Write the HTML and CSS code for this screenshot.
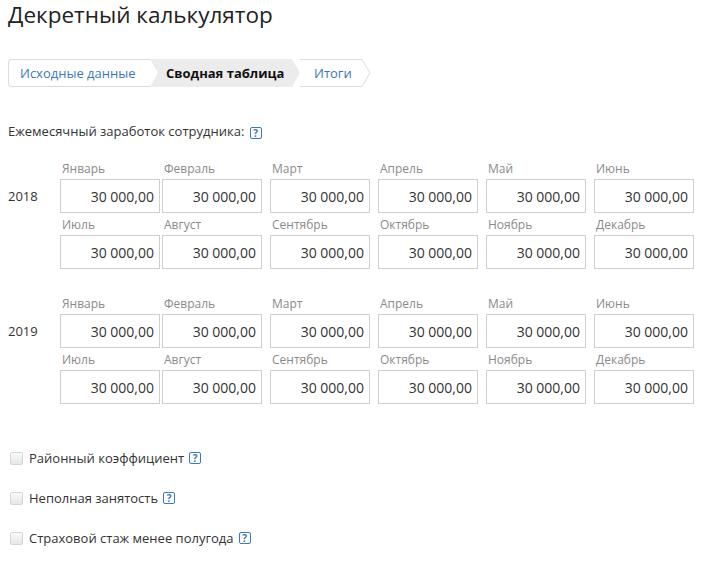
FILE: index.html
```html
<!DOCTYPE html>
<html lang="ru">
<head>
<meta charset="utf-8">
<title>Декретный калькулятор</title>
<link rel="stylesheet" href="styles.css">
</head>
<body>
<div class="page">
  <h1 class="title">Декретный калькулятор</h1>

  <nav class="steps">
    <a class="step step-first">Исходные данные</a>
    <span class="step step-active">Сводная таблица</span>
    <a class="step step-last">Итоги</a>
    <svg class="step-tip" width="9" height="28" viewBox="0 0 9 28"><polyline points="0,0.5 8,14 0,27.5" fill="#fff" stroke="#dcdcdc" stroke-width="1"/></svg>
  </nav>

  <div class="field-label">Ежемесячный заработок сотрудника: <span class="help">?</span></div>

  <div class="year-block">
    <div></div>
    <div class="m">Январь</div><div class="m">Февраль</div><div class="m">Март</div><div class="m">Апрель</div><div class="m">Май</div><div class="m">Июнь</div>
    <div class="year">2018</div>
    <input class="amount" value="30 000,00"><input class="amount" value="30 000,00"><input class="amount" value="30 000,00"><input class="amount" value="30 000,00"><input class="amount" value="30 000,00"><input class="amount" value="30 000,00">
    <div></div>
    <div class="m">Июль</div><div class="m">Август</div><div class="m">Сентябрь</div><div class="m">Октябрь</div><div class="m">Ноябрь</div><div class="m">Декабрь</div>
    <div></div>
    <input class="amount" value="30 000,00"><input class="amount" value="30 000,00"><input class="amount" value="30 000,00"><input class="amount" value="30 000,00"><input class="amount" value="30 000,00"><input class="amount" value="30 000,00">
  </div>

  <div class="year-block">
    <div></div>
    <div class="m">Январь</div><div class="m">Февраль</div><div class="m">Март</div><div class="m">Апрель</div><div class="m">Май</div><div class="m">Июнь</div>
    <div class="year">2019</div>
    <input class="amount" value="30 000,00"><input class="amount" value="30 000,00"><input class="amount" value="30 000,00"><input class="amount" value="30 000,00"><input class="amount" value="30 000,00"><input class="amount" value="30 000,00">
    <div></div>
    <div class="m">Июль</div><div class="m">Август</div><div class="m">Сентябрь</div><div class="m">Октябрь</div><div class="m">Ноябрь</div><div class="m">Декабрь</div>
    <div></div>
    <input class="amount" value="30 000,00"><input class="amount" value="30 000,00"><input class="amount" value="30 000,00"><input class="amount" value="30 000,00"><input class="amount" value="30 000,00"><input class="amount" value="30 000,00">
  </div>

  <div class="options">
    <label class="option"><input type="checkbox" class="check"> Районный коэффициент <span class="help">?</span></label>
    <label class="option"><input type="checkbox" class="check"> Неполная занятость <span class="help">?</span></label>
    <label class="option"><input type="checkbox" class="check"> Страховой стаж менее полугода <span class="help">?</span></label>
  </div>
</div>
</body>
</html>
```

FILE: styles.css
```css
* { box-sizing: border-box; }
html, body { margin: 0; background: #fff; }
body {
  font-family: "Open Sans", "Noto Sans", sans-serif;
  color: #333;
  font-size: 13px;
}
.page { padding: 0 8px; }

.title {
  margin: 0;
  padding-top: 0;
  font-size: 22.5px;
  font-weight: 400;
  line-height: 30px;
  color: #222;
}

.steps {
  display: flex;
  height: 28px;
  margin-top: 29px;
  font-size: 13px;
  line-height: 26px;
}
.step { display: block; height: 28px; white-space: nowrap; }
.step-first {
  width: 142px;
  padding-left: 11px;
  border: 1px solid #dcdcdc;
  border-right: none;
  border-radius: 4px 0 0 4px;
  color: #3d78b8;
}
.step-active {
  width: 150px;
  padding-left: 16px;
  background: #ececec;
  font-weight: 700;
  color: #111;
  line-height: 28px;
  clip-path: polygon(0 0, calc(100% - 8px) 0, 100% 50%, calc(100% - 8px) 100%, 0 100%, 8px 50%);
}
.step-last {
  width: 62px;
  padding-left: 14px;
  border-top: 1px solid #dcdcdc;
  border-bottom: 1px solid #dcdcdc;
  color: #3d78b8;
}
.step-tip { display: block; flex: none; }

.field-label {
  margin-top: 29px;
  line-height: 30px;
  color: #333;
}

.help {
  display: inline-block;
  width: 12px;
  height: 12px;
  border: 1px solid #3d78b8;
  border-radius: 2px;
  color: #3d78b8;
  font-size: 10px;
  font-weight: 700;
  line-height: 10px;
  text-align: center;
  vertical-align: -1px;
  margin-left: 2px;
}

.year-block {
  display: grid;
  grid-template-columns: 52px 102px 108px 108px 108px 108px 100px;
  grid-template-rows: 22px 34px 22px 34px;
  margin-top: 11px;
}
.year-block + .year-block { margin-top: 23px; }
.year {
  align-self: center;
  font-size: 13px;
  color: #333;
}
.m {
  font-size: 12px;
  color: #8a8a8a;
  line-height: 20px;
  padding-top: 2px;
  padding-left: 2px;
}
.amount {
  width: 100px;
  height: 34px;
  margin: 0;
  border: 1px solid #cfcfcf;
  padding: 0 5px 0 4px;
  font-family: inherit;
  font-size: 14px;
  color: #333;
  text-align: right;
  background: #fff;
}

.options {
  margin-top: 44px;
  display: flex;
  flex-direction: column;
  gap: 20px;
}
.option {
  display: flex;
  align-items: center;
  height: 20px;
  color: #333;
}
.check {
  appearance: none;
  -webkit-appearance: none;
  width: 13px;
  height: 13px;
  margin: 0 6px 0 2px;
  border: 1px solid #d4d4d4;
  border-radius: 2px;
  background: linear-gradient(#fafafa, #e6e6e6);
}
.option .help { margin-left: 5px; vertical-align: 0; }
```
